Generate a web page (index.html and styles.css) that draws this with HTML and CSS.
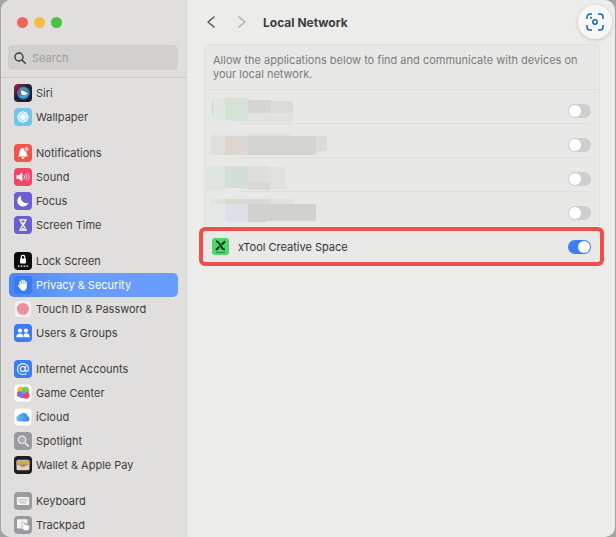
FILE: index.html
```
<!DOCTYPE html>
<html lang="en">
<head>
    <meta charset="UTF-8">
    <meta name="viewport" content="width=device-width, initial-scale=1.0">
    <title>Local Network</title>
    <link rel="stylesheet" href="styles.css">
</head>
<body>

    <div class="window">
        <aside class="sidebar">
            <div class="lights">
                <button type="button" class="light red" aria-label="Close"></button>
                <button type="button" class="light yellow" aria-label="Minimize"></button>
                <button type="button" class="light green" aria-label="Zoom"></button>
            </div>

            <label class="search">
                <svg width="12" height="12" viewBox="0 0 12 12" fill="none" stroke="#3b3b3a" stroke-width="1.4" stroke-linecap="round"><circle cx="5" cy="5" r="4"/><path d="M8 8l3.3 3.3"/></svg>
                <input type="search" placeholder="Search" aria-label="Search">
            </label>

            <nav class="menu">
                <ul>
                    <li><a href="#">
                        <svg class="icon" viewBox="0 0 18 18">
                            <defs>
                                <linearGradient id="siri" x1="0" y1="0" x2="1" y2="1"><stop offset="0" stop-color="#a32a52"/><stop offset=".4" stop-color="#26213f"/><stop offset="1" stop-color="#151b31"/></linearGradient>
                                <linearGradient id="orb" x1="0" y1="0" x2="1" y2="1"><stop offset="0" stop-color="#c03a80"/><stop offset=".5" stop-color="#2e7b9c"/><stop offset="1" stop-color="#3e62c6"/></linearGradient>
                            </defs>
                            <rect width="18" height="18" rx="4" fill="url(#siri)"/>
                            <circle cx="9.500" cy="9" r="6.500" fill="url(#orb)"/>
                            <path d="M5 6c3-4 8-3 10 2-3-2-6-2-10-2z" fill="#3f9f93"/>
                            <path d="M4 11c3 4 8 4 11-1-3 1-7 2-11 1z" fill="#43a8dc"/>
                            <path d="M7 6.500c3 0 5 1.500 7 3-2 1.500-4 1.800-6 1.500-1.300-1-1.500-3-1-4.500z" fill="#e9fbfb"/>
                        </svg>Siri</a></li>
                    <li><a href="#">
                        <svg class="icon" viewBox="0 0 18 18">
                            <rect width="18" height="18" rx="4" fill="#74c5ee"/>
                            <g fill="#a6dbf5" stroke="#fff" stroke-width=".9">
                                <circle cx="9" cy="5.300" r="1.700"/><circle cx="11.600" cy="6.400" r="1.700"/><circle cx="12.700" cy="9" r="1.700"/><circle cx="11.600" cy="11.600" r="1.700"/>
                                <circle cx="9" cy="12.700" r="1.700"/><circle cx="6.400" cy="11.600" r="1.700"/><circle cx="5.300" cy="9" r="1.700"/><circle cx="6.400" cy="6.400" r="1.700"/>
                            </g>
                            <circle cx="9" cy="9" r="2" fill="#fff"/>
                        </svg>Wallpaper</a></li>
                </ul>
                <ul>
                    <li><a href="#">
                        <svg class="icon" viewBox="0 0 18 18">
                            <rect width="18" height="18" rx="4" fill="#f2544a"/>
                            <path d="M3.800 12.600c1.600-1.300 1.500-3 1.800-5C6 5.300 7.200 4 9 4c1.900 0 3 1.300 3.400 3.600.3 2 .2 3.700 1.800 5z" fill="#fff"/>
                            <path d="M7.400 13.300h3.200a1.600 1.600 0 0 1-3.200 0z" fill="#fff"/>
                            <circle cx="12.600" cy="5" r="2.400" fill="#ffc4bf" stroke="#f2544a" stroke-width=".8"/>
                        </svg>Notifications</a></li>
                    <li><a href="#">
                        <svg class="icon" viewBox="0 0 18 18">
                            <rect width="18" height="18" rx="4" fill="#f44468"/>
                            <path d="M2.500 7.200h2.200L8.300 4.300v9.400L4.700 10.800H2.500z" fill="#fff"/>
                            <g fill="none" stroke="#fff" stroke-width="1" stroke-linecap="round"><path d="M10 7.300c.8 1 .8 2.400 0 3.400"/><path d="M11.800 6c1.500 1.700 1.500 4.300 0 6" opacity=".8"/><path d="M13.600 4.700c2.100 2.500 2.100 6.100 0 8.600" opacity=".6"/></g>
                        </svg>Sound</a></li>
                    <li><a href="#">
                        <svg class="icon" viewBox="0 0 18 18">
                            <rect width="18" height="18" rx="4" fill="#6a60d2"/>
                            <path d="M7.200 3.600c-1.400 4.600 2 8.300 7.200 7.400-1.100 2.300-3.100 3.600-5.400 3.600-3.200 0-5.600-2.500-5.600-5.500 0-2.400 1.500-4.600 3.800-5.500z" fill="#fff"/>
                        </svg>Focus</a></li>
                    <li><a href="#">
                        <svg class="icon" viewBox="0 0 18 18">
                            <rect width="18" height="18" rx="4" fill="#6a60d2"/>
                            <path d="M5.500 3.800h7M5.500 14.200h7M6.500 4c0 2.800 1 3.700 2.500 5 1.500-1.300 2.500-2.200 2.500-5M6.500 14c0-2.800 1-3.700 2.500-5 1.500 1.300 2.500 2.200 2.500 5" fill="none" stroke="#fff" stroke-width="1.200" stroke-linecap="round"/>
                            <path d="M7.500 6.500h3L9 8.500zM7 13.500l2-2 2 2z" fill="#fff"/>
                        </svg>Screen Time</a></li>
                </ul>
                <ul>
                    <li><a href="#">
                        <svg class="icon" viewBox="0 0 18 18">
                            <rect width="18" height="18" rx="4" fill="#0c0c0c"/>
                            <path d="M7.200 7V5.200a1.800 1.800 0 0 1 3.600 0V7" fill="none" stroke="#fff" stroke-width="1.200"/>
                            <rect x="6" y="6.500" width="6" height="5" rx="1" fill="#fff"/>
                            <path d="M4 14.200h1.600M6.800 14.200h1.600M9.600 14.200h1.600M12.400 14.200H14" stroke="#fff" stroke-width="1.300"/>
                        </svg>Lock Screen</a></li>
                    <li><a href="#" class="active" aria-current="page">
                        <svg class="icon" viewBox="0 0 18 18">
                            <rect width="18" height="18" rx="4" fill="#3a7bf5"/>
                            <path d="M6.300 9V5.600M8.200 8V4.200M10.100 8V4.400M12 9V6" stroke="#fff" stroke-width="1.400" stroke-linecap="round"/>
                            <path d="M5.600 8h7.100v3c0 2.200-1.200 3.700-3.200 3.700-1.700 0-2.600-.7-3.400-2L4 9.800c-.3-.8.500-1.200 1-.7l.9.900z" fill="#fff"/>
                        </svg>Privacy &amp; Security</a></li>
                    <li><a href="#">
                        <svg class="icon" viewBox="0 0 18 18">
                            <rect x=".5" y=".5" width="17" height="17" rx="4" fill="#f3f1f0" stroke="#d6d4d3" stroke-width=".5"/>
                            <circle cx="9" cy="9" r="6.200" fill="#f0a3ab"/>
                            <g fill="none" stroke="#df7785" stroke-width=".8"><path d="M4 8c1-5 9-5 10 0M4 11c0-6 9-7 9.500 0M6 13c-1-5 5-7 6-2v2M8.500 14c0-2-1-5 .5-5s1.500 3 1.500 5"/></g>
                        </svg>Touch ID &amp; Password</a></li>
                    <li><a href="#">
                        <svg class="icon" viewBox="0 0 18 18">
                            <rect width="18" height="18" rx="4" fill="#3a7df4"/>
                            <g fill="#fff"><circle cx="6" cy="6.600" r="2.100"/><circle cx="12" cy="6.600" r="2.100"/><path d="M2.200 13.200c0-5 7.400-5 7.400 0zM10.400 13.200c0-1.300-.3-2.200-.9-3 2.300-1.900 6.300-.8 6.300 3z"/></g>
                        </svg>Users &amp; Groups</a></li>
                </ul>
                <ul>
                    <li><a href="#">
                        <svg class="icon" viewBox="0 0 18 18">
                            <rect width="18" height="18" rx="4" fill="#3a7df4"/>
                            <g fill="none" stroke="#fff" stroke-width="1.100" stroke-linecap="round"><circle cx="8.900" cy="9" r="2.500"/><path d="M11.600 6.600l-.4 3.500c-.1 1.900 3.300 1.700 3.300-1.300 0-3-2.400-5.200-5.500-5.200A5.400 5.400 0 0 0 3.500 9c0 3.200 2.400 5.500 5.500 5.500 1.200 0 2.100-.2 3-.7"/></g>
                        </svg>Internet Accounts</a></li>
                    <li><a href="#">
                        <svg class="icon" viewBox="0 0 18 18">
                            <rect x=".5" y=".5" width="17" height="17" rx="4" fill="#fff"/>
                            <circle cx="7" cy="6.500" r="3.700" fill="#f7b632"/><circle cx="11.500" cy="6.500" r="3.700" fill="#6bd44e"/><circle cx="6" cy="10.200" r="3" fill="#a757e3"/><circle cx="8.500" cy="11.300" r="3" fill="#3c8ff0"/><circle cx="12" cy="11.300" r="3.500" fill="#f23e7c"/><circle cx="9.600" cy="8.200" r="2" fill="#46bda8"/>
                        </svg>Game Center</a></li>
                    <li><a href="#">
                        <svg class="icon" viewBox="0 0 18 18">
                            <defs><linearGradient id="cloud" x1="0" y1="0" x2="1" y2="0"><stop offset="0" stop-color="#70bdf7"/><stop offset="1" stop-color="#2e84ec"/></linearGradient></defs>
                            <rect x=".5" y=".5" width="17" height="17" rx="4" fill="#fff"/>
                            <path d="M5 13.500a3 3 0 0 1-.5-5.900A2.400 2.400 0 0 1 7 5.800a4 4 0 0 1 6.700 2.500 2.700 2.700 0 0 1-.4 5.200z" fill="url(#cloud)"/>
                        </svg>iCloud</a></li>
                    <li><a href="#">
                        <svg class="icon" viewBox="0 0 18 18">
                            <rect width="18" height="18" rx="4" fill="#9b9a9e"/>
                            <circle cx="8" cy="7.800" r="3.700" fill="#aeadb0" stroke="#eee" stroke-width="1.200"/><path d="M10.900 10.700l3.400 3.400" stroke="#eee" stroke-width="1.500" stroke-linecap="round"/>
                        </svg>Spotlight</a></li>
                    <li><a href="#">
                        <svg class="icon" viewBox="0 0 18 18">
                            <rect width="18" height="18" rx="4" fill="#1c1c1b"/>
                            <rect x="2.500" y="3.800" width="13" height="10.500" rx="1.500" fill="#d8d6cc"/>
                            <path d="M3 5.200h12" stroke="#74a8a4" stroke-width="1.200"/><path d="M2.500 6.700h13" stroke="#e2b13e" stroke-width="1.400"/><path d="M2.500 8h13" stroke="#7fae61" stroke-width="1.200"/>
                            <path d="M2.500 8.600h13c-3 0-4.500 2.400-6.500 2.400s-3.500-2.400-6.500-2.400z" fill="#e4674f"/>
                        </svg>Wallet &amp; Apple Pay</a></li>
                </ul>
                <ul>
                    <li><a href="#">
                        <svg class="icon" viewBox="0 0 18 18">
                            <rect width="18" height="18" rx="4" fill="#9b9a9e"/>
                            <rect x="2.800" y="5" width="12.400" height="8" rx="1.300" fill="#f4f4f4"/>
                            <path d="M4.500 7.200h9M4.500 9h9" stroke="#b4b3b6" stroke-width="1" stroke-dasharray="1.200 .4"/><path d="M6 10.900h6" stroke="#b4b3b6" stroke-width="1"/>
                        </svg>Keyboard</a></li>
                    <li><a href="#">
                        <svg class="icon" viewBox="0 0 18 18">
                            <rect width="18" height="18" rx="4" fill="#9b9a9e"/>
                            <path d="M4 3.300h8.500c.8 0 1 .4 1 1V8l-4-1.500v6H4c-.7 0-1-.4-1-1V4.300c0-.6.3-1 1-1z" fill="#f4f4f4"/>
                            <path d="M8 6.200c.6-.5 1.200-.3 1.600.3l1.100 1.700 3.200.8c1.300.4 1.700 1.200 1.500 2.400-.2 2-1.300 3.300-3.300 3.300-1.500 0-2.600-.6-3.500-1.700l-1.400-1.600c-.5-.9.500-1.500 1.200-.9l.8.500-1.400-3.500c-.2-.5-.1-1 .2-1.300z" fill="#fff" stroke="#9b9a9e" stroke-width=".6"/>
                        </svg>Trackpad</a></li>
                </ul>
            </nav>
        </aside>

        <main class="content">
            <header class="toolbar">
                <button type="button" aria-label="Back"><svg width="8" height="12" viewBox="0 0 8 12" fill="none" stroke="#555554" stroke-width="1.500" stroke-linecap="round" stroke-linejoin="round"><path d="M7 1L1 6l6 5"/></svg></button>
                <button type="button" aria-label="Forward"><svg width="8" height="12" viewBox="0 0 8 12" fill="none" stroke="#b0b0ae" stroke-width="1.500" stroke-linecap="round" stroke-linejoin="round"><path d="M1 1l6 5-6 5"/></svg></button>
                <h1>Local Network</h1>
            </header>

            <section class="panel">
                <p class="note">Allow the applications below to find and communicate with devices on your local network.</p>

                <!-- app names are hidden behind mosaic blocks -->
                <div class="row">
                    <svg class="mosaic" viewBox="205 90 124 34">
                        <path d="M212 98h13v22l-13-3z" fill="#dfe7df"/><path d="M212 100h1v15h-1z" fill="#b9e2c2"/>
                        <path d="M225 98h23v24l-23-2z" fill="#d5e3d7"/>
                        <path d="M248 99l4 1h19v13h-23z" fill="#d6d6d4"/><path d="M271 101h22v12h-22z" fill="#dcdcda"/><path d="M248 113h45v9h-45z" fill="#e2e2e0"/>
                    </svg>
                    <input type="checkbox" class="switch" aria-label="Allow application 1">
                </div>
                <div class="row">
                    <svg class="mosaic" viewBox="205 124 124 34">
                        <path d="M211 133h37v3h-37z" fill="#e0e5de"/><path d="M248 133h45v3h-45z" fill="#e2e2e0"/>
                        <path d="M211 136h14v19h-14z" fill="#dfe0db"/><path d="M225 136h23v19h-23z" fill="#ded6d1"/>
                        <path d="M248 136h68v17l-2 2h-66z" fill="#d4d4d2"/><path d="M316 136h11v14l-11 3z" fill="#dbdbd9"/>
                    </svg>
                    <input type="checkbox" class="switch" aria-label="Allow application 2">
                </div>
                <div class="row">
                    <svg class="mosaic" viewBox="205 158 124 34">
                        <path d="M206 166h19v24h-19z" fill="#dfe6df"/><path d="M225 166h23v22h-23z" fill="#d3dfd5"/>
                        <path d="M248 166h20v16h-20z" fill="#dededc"/><path d="M268 167h18v22h-18z" fill="#e1e1df"/><path d="M248 182h22v8h-22z" fill="#d8d8d6"/>
                    </svg>
                    <input type="checkbox" class="switch" aria-label="Allow application 3">
                </div>
                <div class="row">
                    <svg class="mosaic" viewBox="205 192 124 34">
                        <path d="M211 199h14v5h-14z" fill="#dce3db"/><path d="M225 199h23v5h-23z" fill="#d2ddd2"/><path d="M248 199h22v5h-22z" fill="#d9d9d7"/><path d="M270 199h23v5h-23z" fill="#e0e0de"/>
                        <path d="M211 204h14v17h-14z" fill="#e4e8e8"/><path d="M225 204h23v18h-23z" fill="#dfe0e7"/><path d="M248 204h68v17h-50v1h-18z" fill="#d1d1cf"/>
                    </svg>
                    <input type="checkbox" class="switch" aria-label="Allow application 4">
                </div>
            </section>

            <div class="highlight">
                <svg width="17" height="17" viewBox="0 0 17 17"><rect width="17" height="17" rx="3" fill="#4fd66c"/><path d="M4 3.500h1c.7 0 1.200.5 1.700 1.300l3.600 5.400c.7 1 1.200 1.400 2.700 1.400" fill="none" stroke="#12351b" stroke-width="2"/><path d="M13 3.200L9.700 6.700M7.300 8.700L4 12" stroke="#12351b" stroke-width="2"/><path d="M4 14.500h9" stroke="#2d8a43" stroke-width="1"/></svg>
                <label for="xtool">xTool Creative Space</label>
                <input type="checkbox" class="switch" id="xtool" checked>
            </div>
        </main>
    </div>

    <button type="button" class="scan" aria-label="Visual search">
        <svg width="18" height="18" viewBox="0 0 18 18" fill="none" stroke="#1268bd" stroke-width="1.500" stroke-linecap="butt"><path d="M1 6V4a3 3 0 0 1 3-3h2M12 1h2a3 3 0 0 1 3 3v2M17 12v2a3 3 0 0 1-3 3h-2M6 17H4a3 3 0 0 1-3-3v-2"/><circle cx="9" cy="9" r="2.200"/><circle cx="5" cy="4.800" r="1" fill="#1268bd" stroke="none"/></svg>
    </button>

</body>
</html>
```
FILE: styles.css
```
*{box-sizing: border-box;}
ul{list-style: none;margin:0;padding:0;}
a{text-decoration: none;color:inherit;}
button{border:0;padding:0;background:none;}
svg{display:block;flex:none;}
body{
    margin:0;
    background-color:#a3a3a2;
    font-family:Inter, "Liberation Sans", sans-serif;
    font-size:11px;
    color:#3d3d3c;
}

.window{
    min-height:100vh;
    margin:0 1px;
    display:flex;
    border-radius:10px;
    overflow:hidden;
    background-color:#ececea;
}

/* sidebar */
.sidebar{
    width:186px;
    flex:none;
    background-color:#e0dfdd;
    border-right:1px solid #d5d4d2;
}
.lights{
    display:flex;
    gap:6px;
    padding:17px 16px;
}
.light{
    width:11px;
    height:11px;
    border-radius:50%;
}
.light.red{background-color:#f0655b;}
.light.yellow{background-color:#f5bd41;}
.light.green{background-color:#46c446;}

.search{
    display:flex;
    align-items:center;
    gap:6px;
    height:25px;
    margin:0 8px 7px 7px;
    padding:0 6px;
    border-radius:5px;
    background-color:#d1d0ce;
}
.search input{
    flex:1;
    min-width:0;
    border:0;
    padding:0;
    background:none;
    font:inherit;
    outline:none;
}
.search input::placeholder{color:#a09f9d;}

.menu{
    border-top:1px solid #cccbc9;
    padding:3px 8px 0;
}
.menu ul+ul{margin-top:12px;}
.menu a{
    display:flex;
    align-items:center;
    gap:4px;
    height:24px;
    padding:0 5px;
    border-radius:5px;
}
.menu a.active{
    background:linear-gradient(90deg,#4a86f3,#689dfd 40%);
    color:#fff;
}
.icon{
    width:18px;
    height:18px;
}

/* content */
.content{
    flex:1;
    min-width:0;
    padding:0 15px 0 17px;
}
.toolbar{
    display:flex;
    align-items:center;
    height:44px;
    padding-left:3px;
}
.toolbar button{
    width:8px;
    margin-right:23px;
}
.toolbar button+button{margin-right:17px;}
.toolbar h1{
    margin:0;
    font-size:12px;
    font-weight:700;
}
.panel{
    border:1px solid #e0e0de;
    border-bottom:0;
    border-radius:5px 5px 0 0;
    background-color:#e8e8e6;
}
.note{
    margin:0;
    padding:8px;
    border-bottom:1px solid #dfdfdd;
    line-height:14px;
    color:#7c7c7a;
}
.row{
    display:flex;
    justify-content:space-between;
    height:34px;
    padding-right:8px;
    background:linear-gradient(#dfdfdd,#dfdfdd) no-repeat 34px 100% / calc(100% - 42px) 1px;
}
.row:last-child{background:none;}
.row .switch{margin-top:14px;}
.mosaic{
    width:124px;
    height:34px;
}

.switch{
    appearance:none;
    flex:none;
    width:23px;
    height:14px;
    margin:0;
    padding:1px;
    border-radius:7px;
    background-color:#cececc;
}
.switch::before{
    content:"";
    display:block;
    width:12px;
    height:12px;
    border-radius:50%;
    background-color:#fff;
}
.switch:checked{background-color:#3f7ff5;}
.switch:checked::before{margin-left:auto;}

.highlight{
    display:flex;
    align-items:center;
    gap:9px;
    height:39px;
    margin:1px -4px 0 -5px;
    padding:0 9px;
    border:4px solid #ee4f4a;
    border-radius:6px;
    background-color:#e9e9e7;
    color:#333;
}
.highlight label{flex:1;}

/* floating button over the window */
.scan{
    position:fixed;
    top:5px;
    right:4px;
    width:34px;
    height:34px;
    border-radius:50%;
    background-color:#f7f7f5;
    box-shadow:0 1px 4px rgba(0,0,0,.16);
    display:flex;
    align-items:center;
    justify-content:center;
}
```
